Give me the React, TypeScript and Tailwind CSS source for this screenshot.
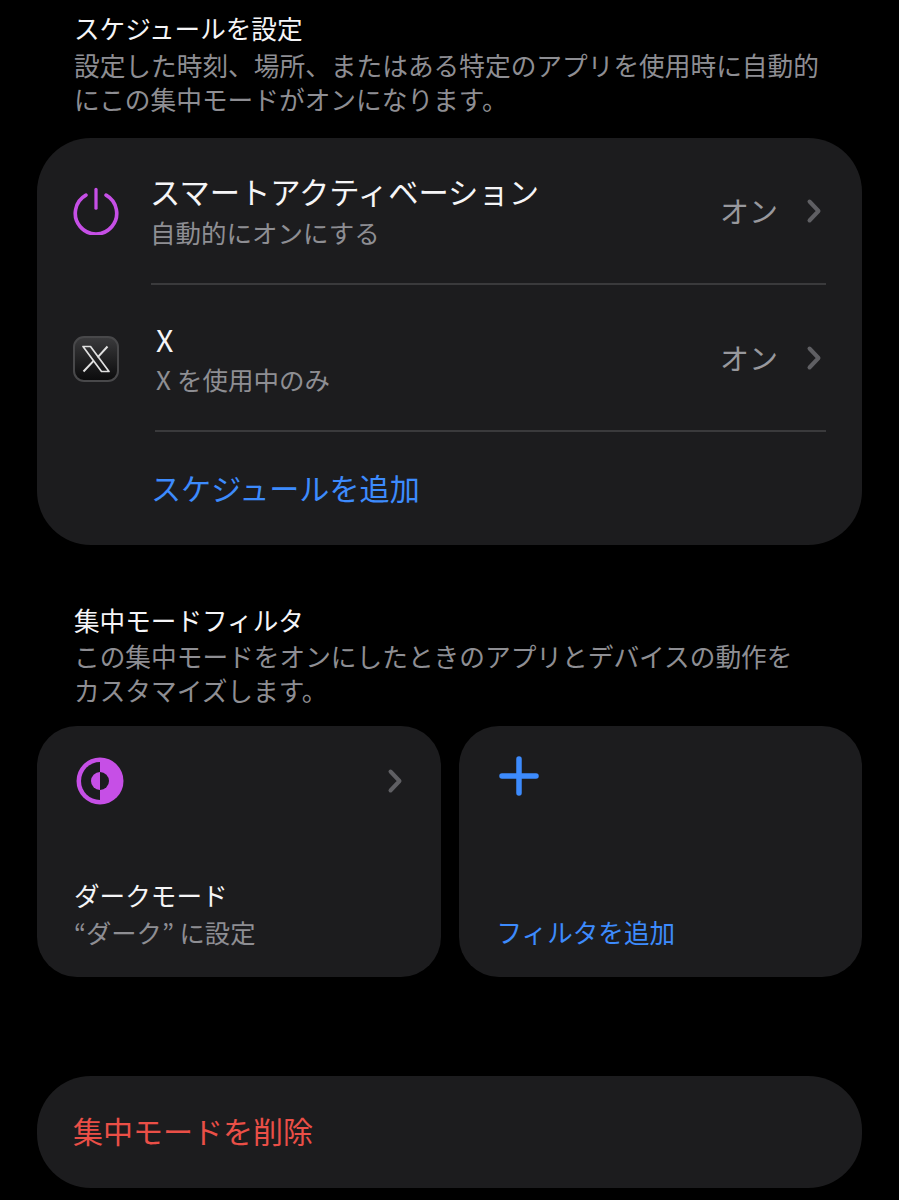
const font = { fontFamily: '"Noto Sans CJK JP", sans-serif' };

function Chevron({ className = "" }: { className?: string }) {
  return (
    <svg width="16" height="26" viewBox="0 0 16 26" className={className} fill="none">
      <path d="M3.5 3.5 L12.5 13 L3.5 22.5" stroke="#5f5f63" strokeWidth="4" strokeLinecap="round" strokeLinejoin="round" />
    </svg>
  );
}

function Power() {
  return (
    <svg width="48" height="48" viewBox="0 0 48 48" fill="none">
      <path d="M13.5 7.5 A21.6 21.6 0 1 0 34.5 7.5" stroke="#c64fe6" strokeWidth="3.8" strokeLinecap="round" />
      <path d="M24 1.5 V21" stroke="#c64fe6" strokeWidth="3.4" strokeLinecap="round" />
    </svg>
  );
}

function XIcon() {
  return (
    <div className="mt-[2px] flex h-[46px] w-[46px] items-center justify-center rounded-[11px] border-2 border-[#48484a] bg-gradient-to-b from-[#3a3a3c] to-[#0c0c0d]">
      <svg width="30" height="28" viewBox="0 0 30 28" fill="none">
        <path d="M2 1.5 H9.5 L28 26.5 H20.5 Z" stroke="#e0e0e0" strokeWidth="1.7" strokeLinejoin="round" />
        <path d="M26.5 1.5 L16.6 12.4 M12.8 15.6 L2.5 26.5" stroke="#e0e0e0" strokeWidth="2" />
      </svg>
    </div>
  );
}

function HalfCircle() {
  return (
    <svg width="48" height="48" viewBox="0 0 48 48">
      <circle cx="24" cy="24" r="23.5" fill="#c64fe6" />
      <path d="M24 5 A19 19 0 0 0 24 43 Z" fill="#1c1c1e" />
      <path d="M24 15 A9 9 0 0 0 24 33 Z" fill="#c64fe6" />
      <path d="M24 15 A9 9 0 0 1 24 33 Z" fill="#1c1c1e" />
    </svg>
  );
}

function Plus() {
  return (
    <svg width="40" height="40" viewBox="0 0 40 40" fill="none">
      <path d="M20 3 V37 M3 20 H37" stroke="#3d8bfd" strokeWidth="5.5" strokeLinecap="round" />
    </svg>
  );
}

function Row({ icon, title, sub, line, textClass = "" }: { icon: React.ReactNode; title: React.ReactNode; sub: React.ReactNode; line: string; textClass?: string }) {
  return (
    <div className="flex h-[147px] flex-col">
      <div className="flex h-[146px] items-center pl-[36px] pr-[40px]">
        <div className="flex w-[46px] justify-center">{icon}</div>
        <div className={`flex-1 ${textClass}`}>
          <div className="text-[30.3px] leading-[42px] text-[#f5f5f7]">{title}</div>
          <div className="text-[25.5px] leading-[40px] text-[#8e8e93]">{sub}</div>
        </div>
        <span className="text-[29px] text-[#98989d]">オン</span>
        <Chevron className="ml-[28px]" />
      </div>
      <div className={`mr-[36px] h-[2px] bg-[#3a3a3c] ${line}`} />
    </div>
  );
}

export default function App() {
  return (
    <div className="h-[1200px] w-[899px] overflow-hidden bg-black pl-[37px] pr-[37px]" style={font}>
      <div className="h-[138px] pl-[37px] pr-[40px] pt-[7px]">
        <div className="text-[25.6px] leading-[41px] text-[#f5f5f7]">スケジュールを設定</div>
        <div className="text-[25.7px] leading-[34px] text-[#8e8e93] whitespace-nowrap">
          設定した時刻、場所、またはある特定のアプリを使用時に自動的
          <br />
          にこの集中モードがオンになります。
        </div>
      </div>

      <div className="h-[407px] rounded-[54px] bg-[#1c1c1e]">
        <Row icon={<Power />} title="スマートアクティベーション" sub="自動的にオンにする" line="ml-[114px]" textClass="pl-[31px]" />
        <Row
          icon={<XIcon />}
          title={<span className="relative top-[1px]">X</span>}
          sub={<><span className="mr-[6px] text-[26px]">X</span>を使用中のみ</>}
          line="ml-[118px]"
          textClass="pl-[37px]"
        />
        <div className="flex h-[111px] items-center pl-[114px] text-[30.1px] text-[#3d8bfd]">スケジュールを追加</div>
      </div>

      <div className="h-[181px] pl-[37px] pt-[55px]">
        <div className="text-[25.6px] leading-[39px] text-[#f5f5f7]">集中モードフィルタ</div>
        <div className="text-[25.7px] leading-[34px] text-[#8e8e93] whitespace-nowrap">
          この集中モードをオンにしたときのアプリとデバイスの動作を
          <br />
          カスタマイズします。
        </div>
      </div>

      <div className="grid h-[251px] grid-cols-2 gap-[18px]">
        <div className="flex flex-col rounded-[40px] bg-[#1c1c1e] pl-[37px] pr-[38px]">
          <div className="flex items-start justify-between pt-[31px]">
            <div className="pl-[2px]"><HalfCircle /></div>
            <Chevron className="mt-[11px]" />
          </div>
          <div className="mt-auto pb-[27px]">
            <div className="text-[25.6px] leading-[38px] text-[#f5f5f7]">ダークモード</div>
            <div className="text-[25.3px] leading-[36px] text-[#8e8e93]">“ダーク” に設定</div>
          </div>
        </div>
        <div className="flex flex-col rounded-[40px] bg-[#1c1c1e] pl-[38px]">
          <div className="pt-[30px] pl-[2px]"><Plus /></div>
          <div className="mt-auto pb-[27px] text-[25.6px] leading-[36px] text-[#3d8bfd]">フィルタを追加</div>
        </div>
      </div>

      <div className="mt-[99px] flex h-[112px] items-center rounded-[54px] bg-[#1c1c1e] pb-[3px] pl-[36px] text-[30px] text-[#ea4f47]">
        集中モードを削除
      </div>
    </div>
  );
}
